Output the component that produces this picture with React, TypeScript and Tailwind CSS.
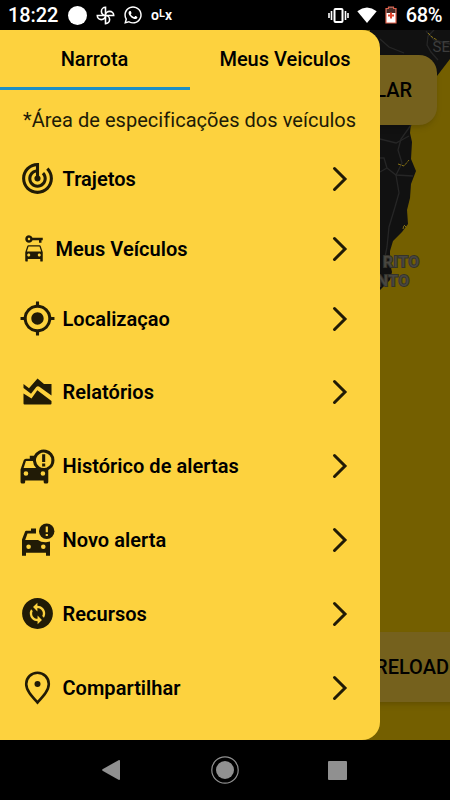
import React from "react";
import {
  MdTrackChanges,
  MdCarRental,
  MdMyLocation,
  MdTaxiAlert,
  MdChangeCircle,
} from "react-icons/md";
import { FaWhatsapp } from "react-icons/fa";

const ReportIcon = () => (
  <svg width="37" height="37" viewBox="0 -1 37 37" fill="currentColor">
    <path d="M4.500 9L10 13.200L18.500 3.500L25 9H32.500V20.500L20 11.500Q18.500 10.800 17.300 12L12 18.800L4.500 13Z" />
    <path d="M4.500 18.500L12.500 23.500L18.300 15.300L32.500 26V28.500Q32.500 29.500 31.500 29.500H5.500Q4.500 29.500 4.500 28.500Z" />
  </svg>
);

const NewAlertIcon = () => (
  <svg width="37" height="37" viewBox="0 0 37 37" fill="currentColor">
    <path
      fillRule="evenodd"
      d="M12 6.500H17V11.500H8.500L6.200 18H19Q22 20.500 27 20.300L31 19.500V33.700H27V30.700H7V33.700H3V17.500L6.200 9.300Q6.500 8.800 7.200 8.800H12ZM9.600 22.400A2.300 2.300 0 1 0 9.600 27A2.300 2.300 0 1 0 9.600 22.400ZM24.300 22.400A2.300 2.300 0 1 0 24.300 27A2.300 2.300 0 1 0 24.300 22.400Z"
    />
    <circle cx="27.700" cy="9.300" r="7.700" />
    <path d="M26.700 4.500H28.900V10.300H26.700ZM26.700 11.900H28.900V14.100H26.700Z" fill="#fdd23e" />
  </svg>
);

const PinIcon = () => (
  <svg width="37" height="37" viewBox="0 0 37 37">
    <path
      d="M18.500 33.500C13 27.500 7.200 21.500 7.200 15A11.300 11.300 0 0 1 29.800 15C29.800 21.500 24 27.500 18.500 33.500Z"
      fill="none"
      stroke="currentColor"
      strokeWidth="2.600"
    />
    <circle cx="18.500" cy="15" r="3" fill="currentColor" />
  </svg>
);

const items = [
  { title: "Trajetos", icon: <MdTrackChanges size={37} /> },
  { title: "Meus Veículos", icon: <MdCarRental size={30} />, small: true },
  { title: "Localizaçao", icon: <MdMyLocation size={37} /> },
  { title: "Relatórios", icon: <ReportIcon /> },
  { title: "Histórico de alertas", icon: <MdTaxiAlert size={37} /> },
  { title: "Novo alerta", icon: <NewAlertIcon /> },
  { title: "Recursos", icon: <MdChangeCircle size={37} /> },
  { title: "Compartilhar", icon: <PinIcon /> },
];

const StatusBar = () => (
  <header className="flex h-[30px] items-center justify-between bg-black pl-2 pr-[8px] text-white">
    <div className="flex items-center">
      <span className="w-[60px] text-[20px] font-medium leading-none tracking-[-0.1px]">18:22</span>
      <span className="h-[19px] w-[19px] rounded-full bg-white" />
      <svg className="ml-[9px]" width="19" height="19" viewBox="0 0 19 19" fill="none" stroke="white" strokeWidth="1.600">
        <path d="M9.500 9.500V1.300A4.100 4.100 0 0 0 9.500 9.500H17.700A4.100 4.100 0 0 0 9.500 9.500V17.700A4.100 4.100 0 0 0 9.500 9.500H1.300A4.100 4.100 0 0 0 9.500 9.500" />
      </svg>
      <FaWhatsapp className="ml-2" size={20} />
      <span className="ml-[8px] flex items-center text-[14px] font-semibold leading-none">
        o<span className="-mt-[4px] text-[11px]">L</span>x
      </span>
    </div>
    <div className="flex items-center">
      <svg width="21" height="17" viewBox="0 0 21 17" fill="none" stroke="white">
        <rect x="6.500" y="2" width="8" height="13" rx="1" strokeWidth="2" />
        <path d="M3.500 4V13M17.500 4V13M1 6V11M20 6V11" strokeWidth="1.600" />
      </svg>
      <svg className="ml-2" width="20" height="17" viewBox="0 0 20 17" fill="white">
        <path d="M10 16L0.300 4.200Q10 -3 19.700 4.200Z" />
      </svg>
      <svg className="ml-[8px]" width="12" height="18" viewBox="0 0 12 18">
        <path d="M3.500 1H8.500V2.500H11V17H1V2.500H3.500Z" fill="white" stroke="#e2604a" strokeWidth="1.200" />
        <path d="M4 1.500H8V3H10.500V7H1.500V3H4Z" fill="#4a2b25" />
        <path d="M6 6.500V12.500M3 9.500H9" stroke="#e2442c" strokeWidth="2" />
      </svg>
      <span className="ml-[9px] text-[20px] font-medium leading-none tracking-[-0.4px]">68%</span>
    </div>
  </header>
);

const MapBackdrop = () => (
  <div className="absolute inset-0 overflow-hidden bg-[#745f00]">
    <svg className="absolute left-[370px] top-0" width="80" height="270" viewBox="0 0 80 270" fill="none">
      <path
        d="M0 0H80V29L67 46L41 93L40 103L42 112L41 129L46 141L41 154L40 168L37 180L38 194L32 202L23 211L20 221L20 233L22 242L20 250L10 260L0 263Z"
        fill="#111111"
      />
      <g stroke="#262626" strokeWidth="1.300">
        <path d="M10 9L19 17L34 23M64 0L58 6L57 15L61 22L68 30M56 1L64 10L80 14" />
        <path d="M41 95L31 109L28 120L32 133L26 145L29 163L25 177L19 197L17 217L14 232" />
        <path d="M10 109L26 113L39 106M10 142L17 138L26 145L43 146M17 138L14 128H10" />
      </g>
      <path d="M58 3L62 7L67 10M28 134L34 136L39 130M33 199L34 195L37 198" stroke="#877112" strokeDasharray="3 1" />
      <text x="62.500" y="22" fontSize="15" fill="#3c3c3c">SE</text>
      <g
        fill="#494741"
        stroke="#35332c"
        strokeWidth="2"
        paintOrder="stroke"
        fontSize="15.500"
        fontWeight="500"
        letterSpacing="0.8"
        textAnchor="end"
      >
        <text x="50" y="236.500">RITO</text>
        <text x="40" y="255.500">NTO</text>
      </g>
    </svg>
    <div className="absolute right-[13px] top-[25px] flex h-[70px] w-[120px] items-center justify-end rounded-[18px] bg-[#75611d] pr-[25px] text-[20px] font-medium shadow-md">
      LAR
    </div>
    <div className="absolute -right-5 top-[602px] flex h-[70px] w-[120px] items-center justify-end bg-[#75611d] pr-[21px] text-[20px] font-medium shadow-md">
      RELOAD
    </div>
  </div>
);

const Drawer = () => (
  <aside className="relative flex h-full w-[380px] flex-col rounded-r-[18px] bg-[#fdd23e] text-black">
    <nav className="flex h-[60px] text-[20px] font-medium">
      <button className="w-1/2 border-b-[3px] border-[#1e8fc4] pr-[1px] pt-[1px]">Narrota</button>
      <button className="w-1/2 whitespace-nowrap pb-[2px]">Meus Veiculos</button>
    </nav>
    <p className="h-[52px] whitespace-nowrap pl-[23px] pt-[15px] text-[20px] leading-[30px] tracking-[0.04px] text-[#211b06]">
      *Área de especificações dos veículos
    </p>
    <ul className="flex flex-col">
      {items.map((item) => (
        <li
          key={item.title}
          className={
            (item.small ? "h-[66px] " : "h-[73.8px] ") + "flex items-center pl-[19px] pr-[32px]"
          }
        >
          <span className="text-[#211b06]">{item.icon}</span>
          <span className="ml-[6.5px] whitespace-nowrap text-[20px] font-semibold leading-none tracking-[0.03px]">
            {item.title}
          </span>
          <svg className="ml-auto" width="16" height="26" viewBox="0 0 16 26" fill="none" stroke="#211b06" strokeWidth="3">
            <path d="M2.500 2.500L13 13L2.500 23.500" strokeLinecap="round" />
          </svg>
        </li>
      ))}
    </ul>
  </aside>
);

const NavigationBar = () => (
  <footer className="flex h-[60px] items-center justify-between bg-black pl-[102px] pr-[103px]">
    <svg width="19" height="20" viewBox="0 0 19 20" fill="#909090">
      <path d="M0.500 9.300L16.500 0.200Q18 -0.200 18 1V19Q18 20.200 16.500 19.800L0.500 10.700Q-0.200 10 0.500 9.300Z" />
    </svg>
    <svg width="28" height="28" viewBox="0 0 28 28">
      <circle cx="14" cy="14" r="13.200" fill="none" stroke="#909090" strokeWidth="1.200" />
      <circle cx="14" cy="14" r="9" fill="#909090" />
    </svg>
    <span className="h-[19px] w-[19px] rounded-[1px] bg-[#909090]" />
  </footer>
);

const App = () => {
  return (
    <div className="flex h-[800px] w-[450px] flex-col overflow-hidden bg-black font-['Roboto',sans-serif]">
      <StatusBar />
      <main className="relative h-[710px]">
        <MapBackdrop />
        <Drawer />
      </main>
      <NavigationBar />
    </div>
  );
};

export default App;
